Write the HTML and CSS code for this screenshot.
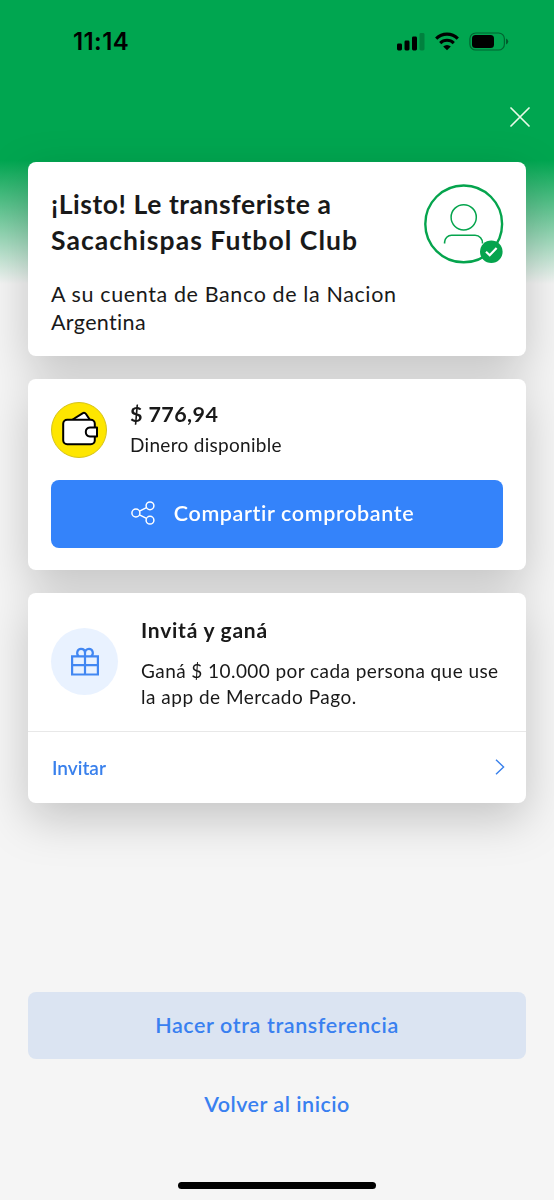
FILE: index.html
```html
<!DOCTYPE html>
<html lang="es">
<head>
<meta charset="utf-8">
<title>Transferencia</title>
<link rel="stylesheet" href="styles.css">
</head>
<body>
<div class="screen">
  <header class="status">
    <span class="time">11:14</span>
    <svg class="status-icons" width="115" height="24" viewBox="0 0 115 24">
      <rect x="0" y="14.500" width="5" height="7" rx="1.400"/>
      <rect x="7.500" y="11.500" width="5" height="10" rx="1.400"/>
      <rect x="15" y="7.500" width="5" height="14" rx="1.400"/>
      <rect x="22.500" y="4" width="5" height="17.500" rx="1.400" opacity=".22"/>
      <path d="M39.200 9.600 A15.500 15.500 0 0 1 60.800 9.600" fill="none" stroke="#000" stroke-width="3.200"/>
      <path d="M43.200 14.100 A9.600 9.600 0 0 1 56.800 14.100" fill="none" stroke="#000" stroke-width="3"/>
      <path d="M46.200 17.600 A5.500 5.500 0 0 1 53.800 17.600 L50 21.300 Z"/>
      <rect x="72.900" y="4" width="34.500" height="17" rx="5.800" fill="none" stroke="#000" stroke-opacity=".4" stroke-width="1.200"/>
      <rect x="75" y="6.100" width="22" height="12.800" rx="3.500"/>
      <path d="M109 9.500 Q111.300 10.300 111.300 12.500 T109 15.500 Z" opacity=".45"/>
    </svg>
  </header>
  <div class="toolbar">
    <svg width="20" height="20" viewBox="0 0 20 20" fill="none" stroke="#e9fbe9" stroke-width="1.700" stroke-linecap="round"><path d="M1 1L19 19M19 1L1 19"/></svg>
  </div>
  <main class="cards">
    <section class="card result">
      <div class="result-text">
        <h1><span class="t1">¡Listo! Le transferiste a</span><br><span class="t2">Sacachispas Futbol Club</span></h1>
        <p><span class="t3">A su cuenta de Banco de la Nacion</span><br><span class="t4">Argentina</span></p>
      </div>
      <svg class="avatar" width="80" height="80" viewBox="0 0 80 80" fill="none" stroke="#05a44d">
        <circle cx="39.700" cy="39.900" r="38.400" stroke-width="2.400"/>
        <circle cx="39.700" cy="33.300" r="12.600" stroke-width="1.500"/>
        <path d="M20.600 59.500V58A7 7 0 0 1 27.600 51.300H51A7.500 7.500 0 0 1 58.500 59.500" stroke-width="1.600"/>
        <circle cx="67.300" cy="67.700" r="11.300" fill="#05a44d" stroke="none"/>
        <path d="M62 67.800L65.700 71.300L72.600 64" stroke="#fff" stroke-width="2.200"/>
      </svg>
    </section>
    <section class="card payment">
      <div class="source">
        <svg width="56" height="56" viewBox="0 0 56 56" stroke="#000" stroke-width="2" stroke-linejoin="round">
          <circle cx="28" cy="28" r="27.500" fill="#fee600" stroke="#d5c21c" stroke-width="1"/>
          <path d="M21 18L31.500 11.300Q33.500 10.100 35 12L39 18Z" fill="#fff"/>
          <rect x="12.200" y="17.700" width="31.600" height="24.600" rx="4" fill="#fff"/>
          <path d="M46 25.500H39Q34.800 26 34.800 30T39 34.500H46Z" fill="#fff"/>
        </svg>
        <div>
          <div class="amount"><span class="t5">$ 776,94</span></div>
          <div class="available"><span class="t6">Dinero disponible</span></div>
        </div>
      </div>
      <button class="btn share">
        <svg width="24" height="24" viewBox="0 0 24 24" fill="none" stroke="#fff" stroke-width="1.500"><circle cx="4.900" cy="12" r="4"/><circle cx="19" cy="4.800" r="3.900"/><circle cx="19" cy="19.200" r="3.900"/><path d="M8.500 10.200L15.500 6.600M8.500 13.800L15.500 17.400"/></svg>
        <span class="t7">Compartir comprobante</span>
      </button>
    </section>
    <section class="card invite">
      <div class="invite-body">
        <span class="gift"><svg width="30" height="30" viewBox="0 0 30 30" fill="none" stroke="#4287f2" stroke-width="2.200"><path d="M2.100 10.300H27.900V28.500H2.100ZM2.100 19.200H27.900M15 10.300V28.500M9 10.300C5.700 8 7.200 2.800 11 2.800C13.500 2.800 15 4.500 15 7V10M15 7C15 4.500 16.500 2.800 19 2.800C22.800 2.800 24.300 8 21 10.300"/></svg></span>
        <div>
          <h2><span class="t8">Invitá y ganá</span></h2>
          <p><span class="t9">Ganá $ 10.000 por cada persona que use</span><br><span class="t10">la app de Mercado Pago.</span></p>
        </div>
      </div>
      <a class="invite-link"><span class="t11">Invitar</span>
        <svg width="10" height="16" viewBox="0 0 10 16" fill="none" stroke="#3980ec" stroke-width="1.400"><path d="M1 .7L8.600 8L1 15.300"/></svg>
      </a>
    </section>
  </main>
  <footer class="actions">
    <button class="btn again"><span class="t12">Hacer otra transferencia</span></button>
    <a class="home"><span class="t13">Volver al inicio</span></a>
    <div class="home-indicator"></div>
  </footer>
</div>
</body>
</html>
```
FILE: styles.css
```css
* { box-sizing: border-box; margin: 0; }
body { font-family: Lato, "Liberation Sans", sans-serif; color: #191919; font-variant-ligatures: none; }
span { white-space: nowrap; }
svg { display: block; flex: none; }
.screen {
  height: 1200px; display: flex; flex-direction: column; overflow: hidden;
  background: linear-gradient(#00a650 0, #00a650 160px, #f5f5f5 284px);
}
.status {
  height: 82px; padding: 0 42px 0 73px;
  display: flex; align-items: center; justify-content: space-between;
}
.time { font: 600 24px/30px Inter, sans-serif; color: #000; letter-spacing: .4px; padding-top: 1px; }
.toolbar { height: 80px; padding: 25px 24px 0; display: flex; justify-content: flex-end; }
.cards {
  display: flex; flex-direction: column; gap: 22.500px; padding: 0 28px;
  filter: drop-shadow(0 16px 23px rgba(0, 0, 0, .2));
}
.card { background: #fff; border-radius: 8px; }
.result { height: 194px; padding: 22px 22px 0 23px; display: flex; justify-content: space-between; }
.result h1 { font-size: 26.500px; line-height: 35.500px; font-weight: 700; padding-top: 3px; }
.result p { font-size: 21.500px; line-height: 28px; margin-top: 22px; }
.payment { height: 191.500px; padding: 23px 23px 0; }
.source { display: flex; gap: 23px; height: 78.500px; }
.amount { font-size: 21.500px; font-weight: 700; line-height: 25px; }
.available { font-size: 19px; line-height: 26px; margin-top: 5px; }
.btn {
  width: 100%; height: 67.500px; border: 0; border-radius: 8px; font: 600 21.500px/28px Lato, sans-serif;
  display: flex; align-items: center; justify-content: center; padding: 0 0 1px;
}
.share { background: #3483fa; color: #fff; gap: 19px; padding-right: 9px; }
.invite { height: 210px; }
.invite-body { height: 139px; border-bottom: 1px solid #e8e8e8; padding: 23px 23px 0; display: flex; gap: 23px; }
.gift {
  width: 67px; height: 67px; margin-top: 12px; border-radius: 50%; background: #e9f2ff;
  display: flex; align-items: center; justify-content: center;
}
.invite h2 { font-size: 21px; line-height: 28px; font-weight: 700; }
.invite p { font-size: 19px; line-height: 26px; margin-top: 14px; }
.invite-link {
  height: 71px; padding: 0 21px 0 24px; display: flex; align-items: center; justify-content: space-between;
  color: #3980ec; font-size: 19px; font-weight: 600;
}
.actions { margin-top: auto; height: 208.500px; padding: 0 28px; display: flex; flex-direction: column; align-items: center; }
.again { background: #dbe4f2; color: #3980f0; }
.home { margin-top: 31px; font-size: 21.500px; line-height: 28px; font-weight: 600; color: #3980f0; }
.home-indicator { width: 198px; height: 7px; border-radius: 4px; background: #000; margin-top: 63.500px; }
.t1 { letter-spacing: .55px; }
.t2 { letter-spacing: 1.050px; }
.t3 { letter-spacing: .62px; }
.t4 { letter-spacing: .35px; }
.t5 { letter-spacing: .4px; }
.t6 { letter-spacing: .3px; }
.t7 { letter-spacing: .62px; }
.t8 { letter-spacing: .75px; }
.t9 { letter-spacing: .43px; }
.t10 { letter-spacing: .5px; }
.t12 { letter-spacing: .6px; }
.t13 { letter-spacing: .5px; }
```
